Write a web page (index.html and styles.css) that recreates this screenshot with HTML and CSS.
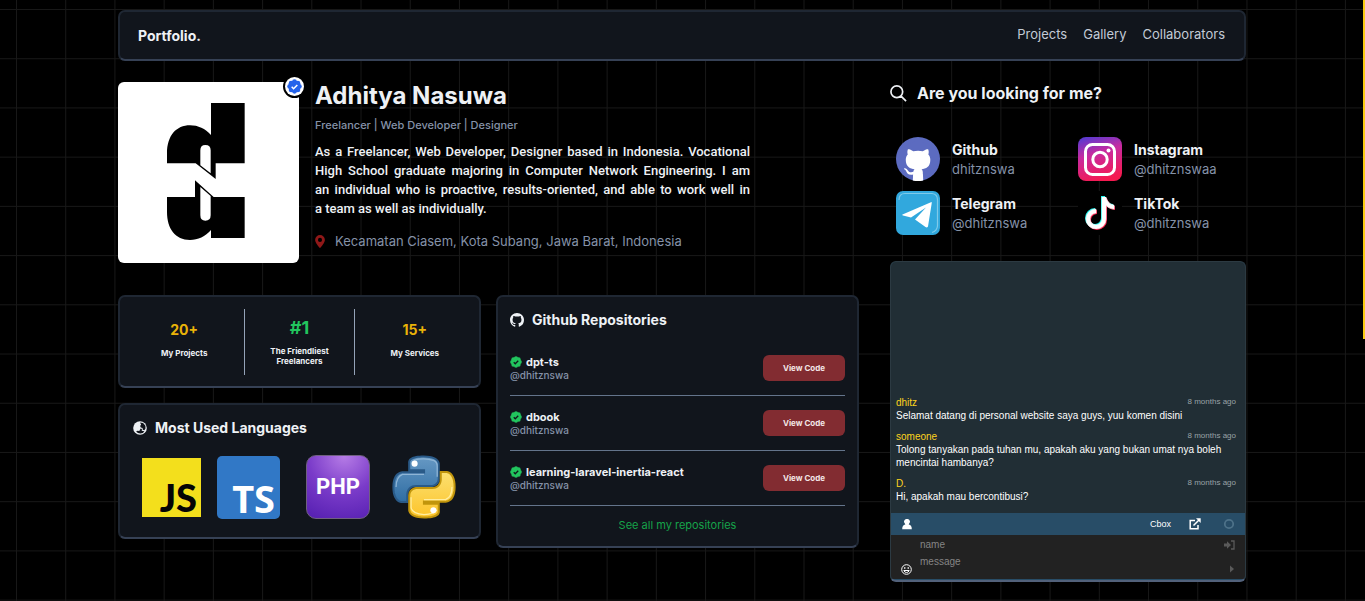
FILE: index.html
```html
<!DOCTYPE html>
<html lang="en">
<head>
<meta charset="utf-8">
<meta name="viewport" content="width=device-width, initial-scale=1">
<title>Portfolio.</title>
<link rel="stylesheet" href="styles.css">
</head>
<body>
<svg class="defs" aria-hidden="true">
  <defs>
    <symbol id="octocat" viewBox="0 0 16 16"><path d="M8 0C3.58 0 0 3.58 0 8c0 3.54 2.29 6.53 5.47 7.59.4.07.55-.17.55-.38 0-.19-.01-.82-.01-1.49-2.01.37-2.53-.49-2.69-.94-.09-.23-.48-.94-.82-1.13-.28-.15-.68-.52-.01-.53.63-.01 1.08.58 1.23.82.72 1.21 1.87.87 2.33.66.07-.52.28-.87.51-1.07-1.78-.2-3.64-.89-3.64-3.95 0-.87.31-1.59.82-2.15-.08-.2-.36-1.02.08-2.12 0 0 .67-.21 2.2.82.64-.18 1.32-.27 2-.27s1.36.09 2 .27c1.53-1.04 2.2-.82 2.2-.82.44 1.1.16 1.92.08 2.12.51.56.82 1.27.82 2.15 0 3.07-1.87 3.75-3.65 3.95.29.25.54.73.54 1.48 0 1.07-.01 1.93-.01 2.2 0 .21.15.46.55.38A8.01 8.01 0 0 0 16 8c0-4.42-3.58-8-8-8z"/></symbol>
    <symbol id="seal" viewBox="0 0 24 24"><circle cx="12" cy="12" r="9.500"/><circle cx="12" cy="4.300" r="3.900"/><circle cx="17.400" cy="6.600" r="3.900"/><circle cx="19.700" cy="12" r="3.900"/><circle cx="17.400" cy="17.400" r="3.900"/><circle cx="12" cy="19.700" r="3.900"/><circle cx="6.600" cy="17.400" r="3.900"/><circle cx="4.300" cy="12" r="3.900"/><circle cx="6.600" cy="6.600" r="3.900"/></symbol>
    <symbol id="note" viewBox="0 0 16 16"><path d="M9 0h1.980c.144.715.54 1.617 1.235 2.512C12.895 3.389 13.797 4 15 4v2c-1.753 0-3.070-.814-4-1.829V11a5 5 0 1 1-5-5v2a3 3 0 1 0 3 3z"/></symbol>
    <symbol id="snake" viewBox="-1 -1 26 26"><path d="M14.250.18l.9.2.73.26.59.3.45.32.34.34.25.34.16.33.1.3.04.26.02.2-.01.13V8.500l-.05.63-.13.55-.21.46-.26.38-.3.31-.33.25-.35.19-.35.14-.33.1-.3.07-.26.04-.21.02H8.770l-.69.05-.59.14-.5.22-.41.27-.33.32-.27.35-.2.36-.15.37-.1.35-.07.32-.04.27-.02.21v3.060H3.170l-.21-.03-.28-.07-.32-.12-.35-.18-.36-.26-.36-.36-.35-.46-.32-.59-.28-.73-.21-.88-.14-1.050-.05-1.230.06-1.220.16-1.040.24-.87.32-.71.36-.57.4-.44.42-.33.42-.24.4-.16.36-.1.32-.05.24-.01h.16l.06.01h8.160v-.83H6.180l-.01-2.750-.02-.37.05-.34.11-.31.17-.28.25-.26.31-.23.38-.2.44-.18.51-.15.58-.12.64-.1.71-.06.77-.04.84-.02 1.270.05z"/></symbol>
    <linearGradient id="insta" x1="0.2" y1="0" x2="0.5" y2="1"><stop offset="0" stop-color="#5a3ad0"/><stop offset=".4" stop-color="#c82aa0"/><stop offset="1" stop-color="#f51a50"/></linearGradient>
    <linearGradient id="pyblue" x1="0" y1="0" x2="0" y2="1"><stop offset="0" stop-color="#6799c4"/><stop offset="1" stop-color="#2f6da3"/></linearGradient>
    <linearGradient id="pygold" x1="0" y1="0" x2="0" y2="1"><stop offset="0" stop-color="#fdc42a"/><stop offset="1" stop-color="#fbe071"/></linearGradient>
  </defs>
</svg>

<div class="scroll-thumb"></div>

<div class="page">
  <header class="card navbar">
    <a class="brand" href="#">Portfolio.</a>
    <nav class="menu">
      <a href="#projects">Projects</a>
      <a href="#gallery">Gallery</a>
      <a href="#collaborators">Collaborators</a>
    </nav>
  </header>

  <div class="columns">
    <main class="main">
      <section class="profile">
        <div class="avatar">
          <svg class="avatar-logo" viewBox="0 0 543 543" role="img" aria-label="Logo">
            <path d="M147 244V215C147 160 175 130 216 130C240 130 262 140 279 159V63H380V244H293V291L233 244Z"/>
            <path d="M147 345H231V295L287 345H380V468H279V444C262 464 240 474 216 474C172 474 147 440 147 390Z"/>
            <path fill="#fff" d="M247 250V205Q247 189 262 189Q278 189 278 205V274ZM247 315L278 342V400Q278 416 262 416Q247 416 247 400Z"/>
          </svg>
          <span class="badge">
            <svg viewBox="0 0 24 24"><use href="#seal" fill="#2563eb"/><path d="M7.500 12.500l3 3 6-6" fill="none" stroke="#fff" stroke-width="2.500"/></svg>
          </span>
        </div>
        <div class="about">
          <h1>Adhitya Nasuwa</h1>
          <p class="roles">Freelancer | Web Developer | Designer</p>
          <p class="bio">As a Freelancer, Web Developer, Designer based in Indonesia. Vocational High School graduate majoring in Computer Network Engineering. I am an&nbsp;individual who is proactive, results-oriented, and able to work well in a&nbsp;team as well as individually.</p>
          <p class="place">
            <svg class="pin" viewBox="0 0 12 16"><path fill="#8f1818" fill-rule="evenodd" d="M6 0a6 6 0 0 1 6 6c0 3-4 8-6 10C4 14 0 9 0 6a6 6 0 0 1 6-6zm0 3.500a2.500 2.500 0 1 0 0 5 2.500 2.500 0 0 0 0-5z"/></svg>
            Kecamatan Ciasem, Kota Subang, Jawa Barat, Indonesia
          </p>
        </div>
      </section>

      <div class="panels">
        <div class="stack">
          <section class="card stats">
            <div class="stat"><strong>20+</strong><span>My Projects</span></div>
            <div class="stat top"><strong>#1</strong><span>The Friendliest Freelancers</span></div>
            <div class="stat"><strong>15+</strong><span>My Services</span></div>
          </section>

          <section class="card languages">
            <h2>
              <svg class="head-icon" viewBox="0 0 16 16"><circle cx="8" cy="8" r="7.800" fill="#eef1f5"/><path fill="#11151c" d="M8 1.600l3.500.8 2.700 3 .1 3.300-1.300 1.800-1.800-.6-.3-2-2-.6-.7-1.600 1-1.700zM8.700 8.600l1.500.6-.2 1.800 3 .6-1.700 2-2.800.8-2.800-.6-2.200-1.700 1.700-1 2 .4z"/></svg>
              Most Used Languages
            </h2>
            <div class="logos">
              <span class="logo js">JS</span>
              <span class="logo ts">TS</span>
              <span class="logo php">PHP</span>
              <svg class="python" viewBox="-1 -1 26 26" role="img" aria-label="Python">
                <use href="#snake" x="-1" y="-1" width="26" height="26" fill="url(#pyblue)" stroke="#2a5a88" stroke-width=".8"/>
                <g transform="rotate(180 12 12)"><use href="#snake" x="-1" y="-1" width="26" height="26" fill="url(#pygold)" stroke="#c1950c" stroke-width=".8"/></g>
                <path d="M8 1.500Q12 .3 16 1.600Q17.300 2.300 17.200 4V8" fill="none" stroke="#8fb5d6" stroke-width=".5"/>
                <path d="M1 12Q1 8 3.500 7H12" fill="none" stroke="#8fb5d6" stroke-width=".5"/>
                <path d="M23 12Q23 16 20.500 17H12" fill="none" stroke="#ffeea0" stroke-width=".5"/>
                <path d="M6.900 16V20Q7.200 22.500 12 22.900Q16 22.700 17 21" fill="none" stroke="#ffeea0" stroke-width=".5"/>
                <circle cx="8.300" cy="2.800" r="1.200" fill="#fff"/><circle cx="15.700" cy="21.200" r="1.200" fill="#fff"/>
              </svg>
            </div>
          </section>
        </div>

        <section class="card repos">
          <h2>
            <svg class="head-icon" viewBox="0 0 16 16" fill="#eef1f5"><use href="#octocat"/></svg>
            Github Repositories
          </h2>
          <ul class="repo-list">
            <li>
              <div><h3><svg class="tick" viewBox="0 0 24 24"><use href="#seal" fill="#22c55e"/><path d="M7.500 12.500l3 3 6-6" fill="none" stroke="#11151c" stroke-width="2.500"/></svg>dpt-ts</h3><p>@dhitznswa</p></div>
              <button type="button">View Code</button>
            </li>
            <li>
              <div><h3><svg class="tick" viewBox="0 0 24 24"><use href="#seal" fill="#22c55e"/><path d="M7.500 12.500l3 3 6-6" fill="none" stroke="#11151c" stroke-width="2.500"/></svg>dbook</h3><p>@dhitznswa</p></div>
              <button type="button">View Code</button>
            </li>
            <li>
              <div><h3><svg class="tick" viewBox="0 0 24 24"><use href="#seal" fill="#22c55e"/><path d="M7.500 12.500l3 3 6-6" fill="none" stroke="#11151c" stroke-width="2.500"/></svg>learning-laravel-inertia-react</h3><p>@dhitznswa</p></div>
              <button type="button">View Code</button>
            </li>
          </ul>
          <a class="see-all" href="#repositories">See all my repositories</a>
        </section>
      </div>
    </main>

    <aside class="side">
      <h2 class="looking">
        <svg class="lens" viewBox="0 0 18 18"><path fill="none" stroke="#eef1f5" stroke-width="1.800" d="M7.200 1a6.200 6.200 0 1 1 0 12.400A6.200 6.200 0 0 1 7.200 1zm4.500 10.700L17 17"/></svg>
        Are you looking for me?
      </h2>
      <div class="socials">
        <a class="social" href="#github">
          <svg viewBox="0 0 16 16"><circle cx="8" cy="8" r="8" fill="#5c6bc0"/><circle cx="8" cy="8.600" r="6.400" fill="#fff"/><use href="#octocat" x="1" y="1.600" width="14" height="14" fill="#5c6bc0"/><path fill="#fff" d="M6.250 13.500H9.800L9.900 15.800Q8 16.200 6.100 15.800z"/></svg>
          <span><b>Github</b><small>dhitznswa</small></span>
        </a>
        <a class="social" href="#instagram">
          <svg viewBox="0 0 44 44"><rect width="44" height="44" rx="8" fill="url(#insta)"/><g fill="none" stroke="#fff" stroke-width="3"><rect x="7.500" y="7.500" width="29" height="30" rx="7"/><circle cx="22" cy="22.500" r="7.200"/></g><circle cx="30.500" cy="13.500" r="2" fill="#fff"/></svg>
          <span><b>Instagram</b><small>@dhitznswaa</small></span>
        </a>
        <a class="social" href="#telegram">
          <svg viewBox="0 0 44 44"><rect width="44" height="44" rx="7" fill="#31a8dd"/><path d="M3 9Q3 2.500 9 2.500H36Q41.500 3 41.500 9V35Q41 40 36 41.500" fill="none" stroke="#7fcaea" stroke-width="1.200"/><path fill="#fff" d="M6.500 23.500L35.500 11Q36 11 35.600 13L32 35.500Q31 37 29.500 36L19 28.500L30 16.500L15 26.500L7 24.500Q5.500 24 6.500 23.500z"/></svg>
          <span><b>Telegram</b><small>@dhitznswa</small></span>
        </a>
        <a class="social" href="#tiktok">
          <svg viewBox="0 0 44 44"><rect width="44" height="44" fill="#000"/><use href="#note" x="5" y="5" width="32" height="32" fill="#25f4ee"/><use href="#note" x="7" y="7" width="32" height="32" fill="#fe2c55"/><use href="#note" x="6" y="6" width="32" height="32" fill="#fff" stroke="#fff" stroke-width=".3"/></svg>
          <span><b>TikTok</b><small>@dhitznswa</small></span>
        </a>
      </div>

      <section class="chat">
        <div class="messages">
          <article><header><b>dhitz</b><time>8 months ago</time></header><p>Selamat datang di personal website saya guys, yuu komen disini</p></article>
          <article><header><b>someone</b><time>8 months ago</time></header><p>Tolong tanyakan pada tuhan mu, apakah aku yang bukan umat nya boleh mencintai hambanya?</p></article>
          <article><header><b>D.</b><time>8 months ago</time></header><p>Hi, apakah mau bercontibusi?</p></article>
        </div>
        <div class="chat-bar">
          <svg class="user" viewBox="0 0 10 11"><path fill="#fff" d="M5 0a2.700 2.700 0 0 1 1.800 4.900v.7Q9.800 6 9.800 10.300H.2Q.2 6 3.200 5.600v-.7A2.700 2.700 0 0 1 5 0z"/></svg>
          <a class="cbox" href="#cbox">Cbox</a>
          <svg viewBox="0 0 12 12"><path fill="none" stroke="#fff" stroke-width="1.500" d="M6 2.500H1.200V10.800H9V7M4.500 7.500L10.500 1.500"/><path fill="#fff" d="M7 .3H11.700V5z"/></svg>
          <svg viewBox="0 0 12 12"><circle cx="6" cy="6" r="4.200" fill="none" stroke="#4d7188" stroke-width="1.800"/></svg>
        </div>
        <form class="chat-form">
          <div class="field">
            <input type="text" aria-label="Name" placeholder="name">
            <svg class="enter" viewBox="0 0 11 10"><path fill="#5a5a5a" d="M0 3.500h3V1.200L7 5 3 8.800V6.500H0z"/><path d="M7 1h3v8H7" fill="none" stroke="#5a5a5a" stroke-width="1.300"/></svg>
          </div>
          <div class="field">
            <svg class="smile" viewBox="0 0 11 11"><circle cx="5.500" cy="5.500" r="4.800" fill="none" stroke="#fff"/><path d="M3.800 3v2M7.200 3v2M2.800 6.500h5.400Q7.500 8.500 5.500 8.500T2.800 6.500z" fill="none" stroke="#fff"/></svg>
            <input type="text" aria-label="Message" placeholder="message">
            <svg class="send" viewBox="0 0 11 10"><path fill="#5a5a5a" d="M6 1.500L10 5 6 8.500z"/></svg>
          </div>
        </form>
      </section>
    </aside>
  </div>
</div>
</body>
</html>
```

FILE: styles.css
```css
:root {
  --grid: calc(640px / 13);
  --panel: #11151c;
  --ink: #eef1f5;
  --muted: #8592a8;
}

* { box-sizing: border-box; }

body {
  margin: 0;
  padding-right: 1px;
  min-height: 100vh;
  background-color: #000;
  background-image:
    linear-gradient(to right, #181818 1px, transparent 1px),
    linear-gradient(to bottom, #181818 1px, transparent 1px);
  background-size: var(--grid) var(--grid);
  background-position: 16px 9px;
  color: var(--ink);
  font-family: Inter, "Liberation Sans", sans-serif;
  font-size: 13px;
}

h1, h2, h3, p, ul { margin: 0; padding: 0; }
a { color: inherit; text-decoration: none; }
svg { display: block; flex: none; }

.defs { position: absolute; width: 0; height: 0; }

.scroll-thumb {
  position: fixed;
  top: 0;
  right: 0;
  width: 2px;
  height: 339px;
  background: #facc15;
}

.page {
  max-width: 1128px;
  margin: 0 auto;
  padding: 10px 0 18px;
}

.card {
  background: var(--panel);
  border: 2px solid #1f2733;
  border-bottom-color: #364155;
  border-radius: 7px;
}

.navbar {
  display: flex;
  align-items: center;
  justify-content: space-between;
  height: 51px;
  padding: 0 19px 1px 18px;
}
.brand { font-size: 14px; font-weight: 700; }
.menu { display: flex; gap: 16px; color: #c3cad6; font-size: 13px; padding-bottom: 2px; }

.columns {
  display: grid;
  grid-template-columns: 741fr 356fr;
  gap: 31px;
  margin-top: 21px;
}

.main, .side { min-width: 0; }

.profile { display: flex; gap: 16px; }
.avatar {
  position: relative;
  flex: none;
  width: 181px;
  height: 181px;
  border-radius: 6px;
  background: #fff;
}
.avatar-logo { width: 100%; height: 100%; }
.badge {
  position: absolute;
  top: -5px;
  right: -5px;
  padding: 2px;
  border-radius: 50%;
  background: #fff;
  box-shadow: 0 0 0 2px #000;
}
.badge svg { width: 15px; height: 15px; }

.about { max-width: 435px; }
h1 { font-size: 24px; line-height: 28px; font-weight: 700; }
.roles { margin-top: 7px; color: var(--muted); font-size: 11px; line-height: 16px; font-weight: 500; }
.bio { margin-top: 9px; font-family: Roboto, sans-serif; font-size: 13px; line-height: 19px; font-weight: 500; text-align: justify; }
.place {
  display: flex;
  align-items: center;
  gap: 10px;
  margin-top: 14px;
  color: var(--muted);
  line-height: 18px;
  white-space: nowrap;
}
.pin { width: 10px; height: 13px; }

.panels {
  display: grid;
  grid-template-columns: 1fr 1fr;
  gap: 15px;
  align-items: start;
  margin-top: 32px;
}
.stack { display: grid; gap: 15px; }

.stats { display: grid; grid-template-columns: 12fr 11fr 12fr; padding: 12px 4px 11px; min-height: 93px; }
.stat {
  display: flex;
  flex-direction: column;
  align-items: center;
  justify-content: center;
  gap: 9px;
  text-align: center;
  padding: 0 12px 6px;
}
.stat strong { color: #eab308; font-size: 14px; line-height: 18px; }
.stat span { font-size: 8px; line-height: 10px; font-weight: 700; }
.stat.top { border: solid #94a3b8; border-width: 0 1px; gap: 8px; padding-bottom: 0; }
.stat.top strong { color: #22c55e; font-size: 18px; line-height: 20px; }

h2 { display: flex; align-items: center; gap: 8px; font-size: 14px; line-height: 20px; font-weight: 700; }
.head-icon { width: 14px; height: 14px; }

.languages { padding: 13px 13px 17px; }
.logos { display: flex; align-items: center; justify-content: space-between; margin-top: 16px; padding: 0 9px; }
.logo { display: flex; align-items: flex-end; justify-content: flex-end; font-weight: 700; }
.js { width: 59px; height: 59px; padding: 0 4px 2px 0; background: #f3df1c; color: #050505; font: 900 38px/36px Lato, sans-serif; }
.ts { width: 63px; height: 63px; padding: 0 5px 1px 0; border-radius: 5px; background: #3178c6; color: #fff; font: 700 38px/40px "Noto Sans", sans-serif; }
.php {
  align-items: center;
  justify-content: center;
  width: 64px;
  height: 64px;
  margin-left: 10px;
  border: 1px solid #706080;
  border-radius: 10px;
  background: radial-gradient(circle at 60% 0, #b67ce6, #7a3bc9 50%, #541eb0);
  color: #fff;
  font: 700 22px/24px Roboto, sans-serif;
}
.python { width: 66px; height: 66px; margin-left: 5px; }

.repos { padding: 13px 12px; }
.repo-list { list-style: none; margin-top: 11px; }
.repo-list li {
  display: flex;
  align-items: center;
  justify-content: space-between;
  min-height: 55px;
  border-bottom: 1px solid #64748b;
}
h3 { display: flex; align-items: center; gap: 4px; font-size: 11px; line-height: 14px; font-weight: 700; }
.tick { width: 12px; height: 12px; }
.repo-list p { color: var(--muted); font-size: 10px; line-height: 12px; font-weight: 500; }
.repo-list button {
  width: 82px;
  height: 26px;
  padding: 0;
  border: 0;
  border-radius: 6px;
  background: #822c31;
  color: #f3e6e6;
  font: 700 8px/12px Inter, sans-serif;
}
.see-all { display: block; margin-top: 11px; color: #16a34a; font-size: 11px; line-height: 16px; text-align: center; }

.looking { gap: 10px; font-size: 16px; line-height: 22px; }
.lens { width: 17px; height: 17px; }
.socials { display: grid; grid-template-columns: 1fr 1fr; gap: 10px 14px; margin-top: 33px; padding: 0 0 0 6px; }
.social { display: flex; align-items: center; gap: 12px; }
.social svg { width: 44px; height: 44px; }
.social b { display: block; font-size: 14px; line-height: 19px; }
.social small { display: block; color: var(--muted); font-size: 13px; line-height: 20px; }

.chat {
  display: flex;
  flex-direction: column;
  height: 321px;
  margin-top: 26px;
  overflow: hidden;
  border: 1px solid #2c3a42;
  border-bottom: 2px solid #52617a;
  border-radius: 6px;
  background: #284d67;
  color: #fff;
  font-family: "Liberation Sans", sans-serif;
  font-size: 10px;
}
.messages {
  flex: 1;
  display: flex;
  flex-direction: column;
  justify-content: flex-end;
  gap: 8px;
  padding: 0 9px 10px 5px;
  background: #212e35;
}
.messages header { display: flex; justify-content: space-between; line-height: 13px; }
.messages header b { color: #fdd31d; font-size: 10px; font-weight: 400; }
.messages time { color: #9aa2a6; font-size: 8px; line-height: 11px; }
.messages p { line-height: 13px; }

.chat-bar { display: flex; align-items: center; gap: 18px; height: 22px; padding: 0 10px 0 11px; }
.chat-bar svg { width: 12px; height: 12px; }
.chat-bar svg.user { width: 10px; height: 11px; }
.chat-bar svg:last-child { margin-left: 4px; }
.cbox { margin-left: auto; font-size: 9px; font-weight: 500; }

.chat-form { height: 44px; margin-bottom: 1px; padding: 1px 10px 0; background: #222; }
.field { display: grid; grid-template-columns: 11px 1fr 11px; align-items: center; column-gap: 8px; }
.field input {
  grid-column: 2;
  grid-row: 1;
  min-width: 0;
  height: 17px;
  padding: 0;
  border: 0;
  outline: 0;
  background: transparent;
  color: #fff;
  font: 10px/13px "Liberation Sans", sans-serif;
}
.field input::placeholder { color: #858585; opacity: 1; }
.field svg { width: 11px; height: 10px; grid-row: 1; }
.enter, .send { grid-column: 3; }
.field svg.smile { height: 11px; }
.smile, .send { margin-top: 11px; }
.field:last-child { align-items: start; }
```
